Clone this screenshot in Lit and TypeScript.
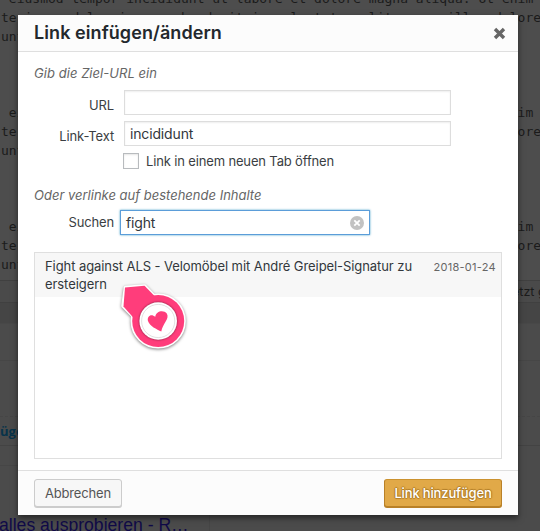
import { LitElement, html, css } from "lit";
import { customElement, property } from "lit/decorators.js";

const LOREM = [
  " eiusmod tempor incididunt ut labore et dolore magna aliqua. Ut enim ad",
  "te irure dolor in reprehenderit in voluptate velit esse cillum dolore e",
  "unt in culpa qui officia deserunt mollit anim id est laborum.",
  "",
  "",
  "",
].join("\n");

@customElement("editor-page")
class EditorPage extends LitElement {
  static styles = css`
    :host {
      display: flex;
      flex-direction: column;
      height: 531px;
      overflow: hidden;
      background: #4b4b4b;
      color: #1b1b1b;
    }
    .code {
      box-sizing: border-box;
      flex: none;
      height: 280px;
      overflow: hidden;
      padding-left: 1px;
      background: #4d4d4d;
      font: 13px/19px "DejaVu Sans Mono", monospace;
    }
    .code pre {
      margin: -11px 0 0;
      font: inherit;
    }
    .bar {
      box-sizing: border-box;
      flex: none;
      display: flex;
      justify-content: space-between;
      align-items: center;
      border-top: 1px solid #404040;
      font: 12.5px "Inter", sans-serif;
      white-space: nowrap;
    }
    .status { height: 22px; background: #4a4a4a; }
    .status span { margin-left: 512px; }
    .gap { height: 21px; background: #454545; }
    .band { height: 37px; background: #4b4b4b; border-color: #484848; }
    .panel { height: 56px; border-color: #464646; }
    .links {
      height: 29px;
      border-top: 1px dashed #464646;
      color: #07334a;
      font: 700 13px "Open Sans", sans-serif;
    }
    .foot { height: 20px; border-color: #434343; }
    .rest {
      height: 66px;
      width: 210px;
      align-items: flex-start;
      border-color: #464646;
      border-right: 1px solid #464646;
      color: #100a48;
      font: 17.6px/20px "Liberation Sans", sans-serif;
    }
    .rest span { margin: 49px 0 0 -1px; }
  `;
  render() {
    return html`
      <div class="code"><pre>${LOREM}
${LOREM}
${LOREM}</pre></div>
      <div class="bar status"><span>etzt ge</span></div>
      <div class="bar gap"></div>
      <div class="bar band"></div>
      <div class="bar panel"></div>
      <div class="bar links"><span>üge</span></div>
      <div class="bar foot"></div>
      <div class="bar rest"><span>alles ausprobieren - R…</span></div>
    `;
  }
}

@customElement("heart-pointer")
class HeartPointer extends LitElement {
  static styles = css`
    :host { display: block; width: 76px; height: 76px; }
    svg { display: block; overflow: visible; filter: drop-shadow(0 1px 1.5px rgba(0, 0, 0, 0.5)); }
    .inner { filter: drop-shadow(0 0 1px rgba(0, 0, 0, 0.55)); }
  `;
  render() {
    return html`<svg width="76" height="76" viewBox="0 0 76 76">
      <g stroke="#fff" stroke-width="3.6" stroke-linejoin="round" fill="#fff">
        <path d="M6.5 7.5 25.5 6 36 17 15 37 4 26Z" />
        <circle cx="39.2" cy="41" r="25.8" />
      </g>
      <g fill="#ff3d7b">
        <path d="M6 7.5 25.5 5.8 37 17.5 15.5 39 4.5 26.5Z" />
        <circle cx="39.2" cy="41" r="26" />
      </g>
      <circle class="inner" cx="39.2" cy="41" r="18.8" fill="#fff" />
      <circle cx="39.2" cy="41" r="16.6" fill="#fff" stroke="#ccc" stroke-width=".6" />
      <path fill="#ff3d7b" d="M42.3 51.5C38 49.5 30.5 46 29 41C27.8 36.5 32 33 36.3 36.8C36.8 31 44.8 29.5 47.8 33.6C51 38.8 43.5 44 42.3 51.5Z" />
    </svg>`;
  }
}

@customElement("link-dialog")
class LinkDialog extends LitElement {
  @property() linkText = "incididunt";
  @property() query = "fight";

  static styles = css`
    :host {
      box-sizing: border-box;
      display: flex;
      flex-direction: column;
      width: 500px;
      height: 500px;
      background: #fff;
      color: #3a3e42;
      font: 13px/18px "Inter", sans-serif;
      letter-spacing: -0.15px;
      box-shadow: 0 3px 6px rgba(0, 0, 0, 0.5);
    }
    header, footer {
      box-sizing: border-box;
      flex: none;
      display: flex;
      align-items: center;
      justify-content: space-between;
      padding: 0 16px;
      background: #fcfcfc;
    }
    header { height: 37px; border-bottom: 1px solid #dfdfdf; padding-right: 12px; }
    footer { height: 45px; border-top: 1px solid #dfdfdf; }
    h1 { margin: 0; font-size: 18px; font-weight: 600; line-height: 36px; letter-spacing: 0.08px; color: #23282d; }
    main { flex: 1; display: flex; flex-direction: column; padding: 12px 16px 11px; min-height: 0; }
    .hint { margin: 0; font-style: italic; color: #666; letter-spacing: 0.05px; line-height: 18px; }
    .second { margin-top: 17px; letter-spacing: 0; }
    .row { display: grid; grid-template-columns: 80px 327px; column-gap: 10px; align-items: center; height: 25px; }
    .url { margin-top: 8px; }
    .title { margin-top: 6px; }
    .row label { text-align: right; padding-top: 4px; }
    .field {
      box-sizing: border-box;
      height: 25px;
      padding: 0 5px;
      border: 1px solid #ddd;
      box-shadow: inset 0 1px 2px rgba(0, 0, 0, 0.07);
      background: #fff;
      color: #32373c;
      font-size: 14px;
      line-height: 24px;
    }
    .check { display: flex; align-items: center; gap: 7px; margin: 7px 0 0 89px; height: 16px; }
    .box {
      box-sizing: border-box;
      width: 16px;
      height: 16px;
      border: 1px solid #b8bbbe;
      box-shadow: inset 0 1px 2px rgba(0, 0, 0, 0.1);
    }
    .search { grid-template-columns: 80px 250px; column-gap: 6px; margin-top: 6px; }
    .row.search label { padding: 0 0 1px; }
    .search .field {
      display: flex;
      align-items: center;
      justify-content: space-between;
      border-color: #5b9dd9;
      box-shadow: 0 0 2px rgba(30, 140, 190, 0.8);
    }
    .results { flex: 1; margin-top: 17px; border: 1px solid #dfdfdf; }
    .result {
      display: flex;
      justify-content: space-between;
      height: 36px;
      padding: 4px 5px 4px 10px;
      background: #f7f7f7;
      color: #32373c;
      letter-spacing: -0.075px;
    }
    .result span { width: 375px; }
    time { font-size: 11px; letter-spacing: 0.28px; color: #666; padding-top: 1px; }
    .btn {
      box-sizing: border-box;
      display: flex;
      align-items: center;
      justify-content: center;
      height: 28px;
      width: 88px;
      border: 1px solid #ccc;
      border-radius: 3px;
      background: #f7f7f7;
      box-shadow: 0 1px 0 #ccc;
      color: #555;
      letter-spacing: -0.15px;
    }
    .primary {
      width: 118px;
      border-color: #cb922f #b98128 #b98128;
      background: #e1a948;
      box-shadow: 0 1px 0 #b98128;
      color: #fff;
      font-weight: 500;
      text-shadow: 0 -1px 1px #b07d28, 1px 0 1px #b07d28, 0 1px 1px #b07d28, -1px 0 1px #b07d28;
    }
  `;

  render() {
    return html`
      <header>
        <h1>Link einfügen/ändern</h1>
        <svg width="13" height="13" viewBox="0 0 13 13">
          <path d="M2 2 11 11M11 2 2 11" stroke="#666" stroke-width="3.4" />
        </svg>
      </header>
      <main>
        <p class="hint">Gib die Ziel-URL ein</p>
        <div class="row url"><label>URL</label><div class="field"></div></div>
        <div class="row title"><label>Link-Text</label><div class="field">${this.linkText}</div></div>
        <div class="check"><div class="box"></div><span>Link in einem neuen Tab öffnen</span></div>
        <p class="hint second">Oder verlinke auf bestehende Inhalte</p>
        <div class="row search">
          <label>Suchen</label>
          <div class="field">
            <span>${this.query}</span>
            <svg width="14" height="14" viewBox="0 0 14 14">
              <circle cx="7" cy="7" r="7" fill="#c2c2c2" />
              <path d="M4.3 4.3 9.7 9.7M9.7 4.3 4.3 9.7" stroke="#fff" stroke-width="1.8" />
            </svg>
          </div>
        </div>
        <div class="results">
          <div class="result">
            <span>Fight against ALS - Velomöbel mit André Greipel-Signatur zu ersteigern</span>
            <time>2018-01-24</time>
          </div>
        </div>
      </main>
      <footer>
        <div class="btn">Abbrechen</div>
        <div class="btn primary">Link hinzufügen</div>
      </footer>
    `;
  }
}

@customElement("app-root")
class AppRoot extends LitElement {
  static styles = css`
    :host { display: block; position: relative; width: 540px; height: 531px; overflow: hidden; }
    link-dialog { position: absolute; left: 18px; top: 15px; }
    heart-pointer { position: absolute; left: 119px; top: 280px; }
  `;
  render() {
    return html`
      <editor-page></editor-page>
      <link-dialog></link-dialog>
      <heart-pointer></heart-pointer>
    `;
  }
}
